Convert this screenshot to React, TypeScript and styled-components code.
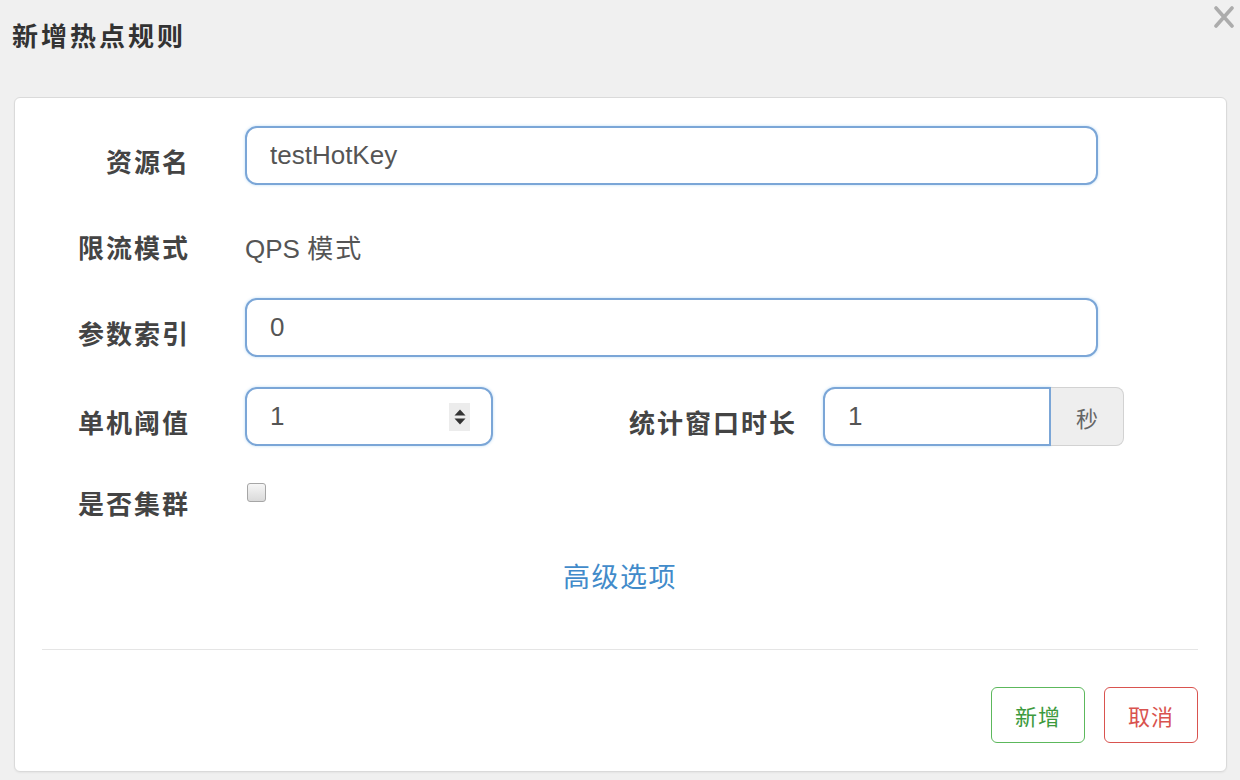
import React from 'react';
import styled, { createGlobalStyle } from 'styled-components';

const GlobalStyle = createGlobalStyle`
  html, body {
    margin: 0;
    padding: 0;
    background: #f0f0f0;
    font-family: "Liberation Sans", "Noto Sans CJK SC", sans-serif;
    color: #333;
  }
  * { box-sizing: border-box; }
`;

const App = () => {
  return (
    <>
      <GlobalStyle />
      <StyledPage>
        <StyledHeader>
          <StyledTitle>新增热点规则</StyledTitle>
          <StyledClose type="button" aria-label="close">
            <svg width="20" height="22" viewBox="0 0 20 22">
              <path d="M2 2 L18 20 M18 2 L2 20" stroke="#acacac" strokeWidth="3.6" strokeLinecap="round" />
            </svg>
          </StyledClose>
        </StyledHeader>

        <StyledCard>
          <StyledRow>
            <StyledLabel>资源名</StyledLabel>
            <StyledTextInput readOnly defaultValue="testHotKey" />
          </StyledRow>

          <StyledStaticRow>
            <StyledLabel>限流模式</StyledLabel>
            <StyledStatic>
              QPS <StyledCjk>模式</StyledCjk>
            </StyledStatic>
          </StyledStaticRow>

          <StyledRow>
            <StyledLabel>参数索引</StyledLabel>
            <StyledTextInput readOnly defaultValue="0" />
          </StyledRow>

          <StyledRow $mt={30}>
            <StyledLabel>单机阈值</StyledLabel>
            <StyledNumberBox>
              <StyledBareInput readOnly defaultValue="1" />
              <StyledSpinner>
                <svg width="12" height="18" viewBox="0 0 12 18">
                  <path d="M6 1.5 L11.5 7.5 L0.5 7.5 Z" fill="#333" />
                  <path d="M0.5 10.5 L11.5 10.5 L6 16.5 Z" fill="#333" />
                </svg>
              </StyledSpinner>
            </StyledNumberBox>
            <StyledWideLabel>统计窗口时长</StyledWideLabel>
            <StyledInputGroup>
              <StyledGroupInput readOnly defaultValue="1" />
              <StyledAddon>秒</StyledAddon>
            </StyledInputGroup>
          </StyledRow>

          <StyledRow>
            <StyledLabel>是否集群</StyledLabel>
            <StyledCheckbox type="checkbox" />
          </StyledRow>

          <StyledAdvanced href="#">高级选项</StyledAdvanced>

          <StyledDivider />

          <StyledFooter>
            <StyledButton $tone="success">新增</StyledButton>
            <StyledButton $tone="danger">取消</StyledButton>
          </StyledFooter>
        </StyledCard>
      </StyledPage>
    </>
  );
};

export default App;

const StyledPage = styled.div`
  width: 1240px;
  height: 780px;
  overflow: hidden;
`;

const StyledHeader = styled.header`
  display: flex;
  justify-content: space-between;
  align-items: flex-start;
  height: 97px;
  padding: 0 6px 0 12px;
`;

const StyledTitle = styled.h4`
  margin: 19px 0 0;
  font-size: 26px;
  line-height: 36px;
  letter-spacing: 3px;
  font-weight: 700;
  color: #333;
`;

const StyledClose = styled.button`
  margin-top: 6px;
  padding: 0;
  border: none;
  background: none;
  display: flex;
`;

const StyledCard = styled.section`
  margin: 0 13px 0 14px;
  background: #fff;
  border: 1px solid #dadada;
  border-radius: 6px;
  box-shadow: 0 1px 2px rgba(0, 0, 0, 0.05);
  padding: 28px 28px 28px 27px;
`;

const StyledRow = styled.div<{ $mt?: number }>`
  display: flex;
  align-items: flex-start;
  height: 59px;
  margin-top: ${({ $mt }) => ($mt ?? 22)}px;
  &:first-child {
    margin-top: 0;
  }
`;

const StyledStaticRow = styled(StyledRow)`
  padding-top: 5px;
  height: 69px;
`;

const StyledLabel = styled.label`
  width: 148px;
  margin-right: 55px;
  padding-top: 8px;
  margin-bottom: -8px;
  text-align: right;
  font-size: 26px;
  letter-spacing: 2px;
  line-height: 59px;
  font-weight: 700;
  color: #444;
  white-space: nowrap;
`;

const StyledWideLabel = styled(StyledLabel)`
  width: 304px;
  margin-right: 26px;
`;

const StyledStatic = styled.div`
  font-size: 26px;
  line-height: 59px;
  padding-top: 8px;
  color: #555;
`;

const StyledCjk = styled.span`
  letter-spacing: 2px;
`;

const StyledTextInput = styled.input`
  width: 853px;
  height: 59px;
  padding: 0 23px;
  border: 2px solid #7ba6d7;
  border-radius: 12px;
  box-shadow: 0 0 3px rgba(102, 175, 233, 0.45);
  font-family: inherit;
  font-size: 26px;
  color: #555;
  outline: none;
`;

const StyledNumberBox = styled.div`
  display: flex;
  align-items: center;
  width: 248px;
  height: 59px;
  padding: 0 23px;
  border: 2px solid #7ba6d7;
  border-radius: 12px;
  box-shadow: 0 0 3px rgba(102, 175, 233, 0.45);
`;

const StyledBareInput = styled.input`
  flex: 1;
  min-width: 0;
  border: none;
  padding: 0;
  font-family: inherit;
  font-size: 26px;
  color: #555;
  outline: none;
  background: transparent;
`;

const StyledSpinner = styled.span`
  display: flex;
  align-items: center;
  justify-content: center;
  width: 21px;
  height: 28px;
  margin-right: -2px;
  background: #ececec;
`;

const StyledInputGroup = styled.div`
  display: flex;
  width: 301px;
  height: 59px;
`;

const StyledGroupInput = styled(StyledTextInput)`
  width: 228px;
  border-radius: 12px 0 0 12px;
`;

const StyledAddon = styled.span`
  flex: 1;
  display: flex;
  align-items: center;
  justify-content: center;
  background: #eee;
  border: 1.5px solid #d2d2d2;
  border-left: none;
  border-radius: 0 8px 8px 0;
  font-size: 22px;
  color: #666;
`;

const StyledCheckbox = styled.input`
  appearance: none;
  margin: 15px 0 0 2px;
  width: 19px;
  height: 19px;
  border: 1px solid #a6a6a6;
  border-radius: 3px;
  background: linear-gradient(#f6f6f6, #dadada);
`;

const StyledAdvanced = styled.a`
  display: block;
  margin-top: 22px;
  text-align: center;
  font-size: 27px;
  letter-spacing: 1.5px;
  line-height: 59px;
  color: #428bca;
  text-decoration: none;
`;

const StyledDivider = styled.hr`
  margin: 41px 0 0;
  border: none;
  height: 1px;
  background: #e5e5e5;
`;

const StyledFooter = styled.div`
  display: flex;
  justify-content: flex-end;
  gap: 19px;
  margin-top: 37px;
`;

const StyledButton = styled.button<{ $tone: 'success' | 'danger' }>`
  width: 94px;
  height: 56px;
  background: #fff;
  border: 1.5px solid ${({ $tone }) => ($tone === 'success' ? '#5cb85c' : '#d9534f')};
  border-radius: 6px;
  color: ${({ $tone }) => ($tone === 'success' ? '#3d9a3d' : '#d9534f')};
  font-family: inherit;
  font-size: 22px;
  letter-spacing: 1px;
`;
